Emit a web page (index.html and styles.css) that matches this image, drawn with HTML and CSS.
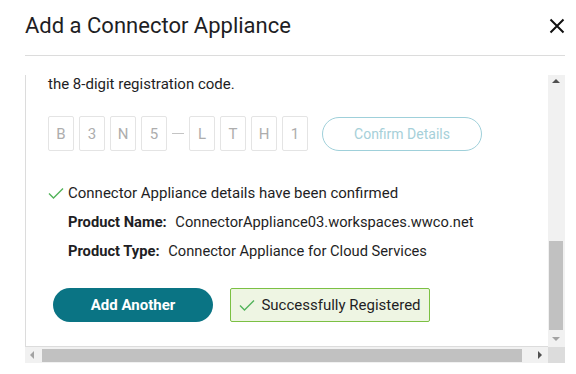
FILE: index.html
```html
<!DOCTYPE html>
<html lang="en">
<head>
    <meta charset="UTF-8">
    <meta name="viewport" content="width=device-width, initial-scale=1.0">
    <title>Add a Connector Appliance</title>
    <link rel="stylesheet" href="styles.css">
</head>
<body>
    <div class="dialog">
        <header class="dialog-header">
            <h2>Add a Connector Appliance</h2>
            <button class="close-btn" aria-label="Close">
                <svg width="16" height="16" viewBox="0 0 16 16"><path d="M1.5 1.5 L14.5 14.5 M14.5 1.5 L1.5 14.5" stroke="#111" stroke-width="2" fill="none"/></svg>
            </button>
        </header>

        <div class="frame">
            <div class="viewport">
                <div class="content">
                    <p class="intro">the 8-digit registration code.</p>

                    <div class="code-row">
                        <span class="code-cell">B</span>
                        <span class="code-cell">3</span>
                        <span class="code-cell">N</span>
                        <span class="code-cell">5</span>
                        <span class="code-dash"></span>
                        <span class="code-cell">L</span>
                        <span class="code-cell">T</span>
                        <span class="code-cell">H</span>
                        <span class="code-cell">1</span>
                        <button class="confirm-btn" disabled>Confirm Details</button>
                    </div>

                    <div class="confirmed">
                        <svg class="check" width="16" height="12" viewBox="0 0 16 12"><path d="M1 6.5 L5.5 11 L15 1.5" stroke="#52b35a" stroke-width="1.4" fill="none"/></svg>
                        Connector Appliance details have been confirmed
                    </div>
                    <div class="detail"><b>Product Name:</b> <span>ConnectorAppliance03.workspaces.wwco.net</span></div>
                    <div class="detail"><b>Product Type:</b> <span>Connector Appliance for Cloud Services</span></div>

                    <div class="actions">
                        <button class="add-btn">Add Another</button>
                        <div class="success">
                            <svg class="check" width="16" height="12" viewBox="0 0 16 12"><path d="M1 6.5 L5.5 11 L15 1.5" stroke="#52b35a" stroke-width="1.4" fill="none"/></svg>
                            Successfully Registered
                        </div>
                    </div>
                </div>
            </div>

            <div class="vscroll">
                <span class="arrow up"></span>
                <span class="vthumb"></span>
                <span class="arrow down"></span>
            </div>
            <div class="hscroll">
                <span class="arrow left"></span>
                <span class="hthumb"></span>
                <span class="arrow right"></span>
            </div>
            <div class="corner"></div>
        </div>
    </div>
</body>
</html>
```

FILE: styles.css
```css
body {
    margin: 0;
    font-family: 'Roboto', 'Liberation Sans', sans-serif;
    color: #1e1e24;
    background: #fff;
}

.dialog {
    margin-left: 25px;
    width: 540px;
}

.dialog-header {
    display: flex;
    justify-content: space-between;
    align-items: center;
    height: 55px;
    border-bottom: 1px solid #dcdcdc;
}

.dialog-header h2 {
    margin: 0;
    font-size: 22px;
    font-weight: 400;
    margin-top: -4px;
}

.close-btn {
    background: none;
    border: none;
    padding: 0;
    width: 16px;
    height: 16px;
    margin-top: -4px;
    cursor: pointer;
}

.frame {
    margin-top: 19px;
    height: 288px;
    display: grid;
    grid-template-columns: 1fr 17px;
    grid-template-rows: 1fr 16px;
}

.viewport {
    border-left: 1px solid #dcdcdc;
    border-bottom: 1px solid #dcdcdc;
    overflow: hidden;
}

.content {
    padding-left: 22px;
    font-size: 15px;
}

.intro {
    margin: 0;
    line-height: 18px;
}

.code-row {
    display: flex;
    align-items: center;
    gap: 5px;
    margin-top: 23px;
}

.code-cell {
    width: 24px;
    height: 33px;
    border: 1px solid #e4e4e4;
    border-radius: 2px;
    display: flex;
    align-items: center;
    justify-content: center;
    color: #adadad;
    font-size: 15px;
}

.code-dash {
    width: 12px;
    height: 1px;
    background: #c4c4c4;
}

.confirm-btn {
    margin-left: 9px;
    width: 160px;
    height: 34px;
    border: 1px solid #9fd0da;
    border-radius: 17px;
    background: #fff;
    color: #a6d0d9;
    font-family: inherit;
    font-size: 14px;
}

.confirmed {
    display: flex;
    align-items: center;
    gap: 4px;
    margin-top: 32px;
    line-height: 20px;
}

.detail {
    padding-left: 20px;
    margin-top: 9px;
    line-height: 20px;
    font-size: 14.7px;
}

.detail b {
    font-weight: 700;
    margin-right: 5px;
}

.actions {
    display: flex;
    gap: 17px;
    margin-top: 27px;
    margin-left: 5px;
}

.add-btn {
    width: 160px;
    height: 34px;
    border: none;
    border-radius: 17px;
    background: #0a7484;
    color: #fff;
    font-family: inherit;
    font-size: 15px;
    font-weight: 700;
}

.success {
    width: 198px;
    height: 32px;
    box-sizing: content-box;
    border: 1px solid #7bc043;
    border-radius: 2px;
    background: #eef5e3;
    display: flex;
    align-items: center;
    gap: 6px;
    justify-content: center;
}

.vscroll {
    background: #f1f1f1;
    position: relative;
}

.vthumb {
    position: absolute;
    left: 1px;
    right: 2px;
    top: 166px;
    height: 89px;
    background: #c1c1c1;
}

.hscroll {
    background: #f1f1f1;
    position: relative;
}

.hthumb {
    position: absolute;
    left: 17px;
    width: 480px;
    top: 2px;
    bottom: 1px;
    background: #c1c1c1;
}

.corner {
    background: #dcdcdc;
}

.arrow {
    position: absolute;
    width: 0;
    height: 0;
    border: 4px solid transparent;
}

.arrow.up {
    top: 4px;
    left: 4px;
    border-bottom-color: #505050;
    border-top-width: 0;
}

.arrow.down {
    bottom: 6px;
    left: 4px;
    border-top-color: #a3a3a3;
    border-bottom-width: 0;
}

.arrow.left {
    left: 5px;
    top: 4px;
    border-right-color: #a3a3a3;
    border-left-width: 0;
}

.arrow.right {
    right: 6px;
    top: 4px;
    border-left-color: #505050;
    border-right-width: 0;
}
```
